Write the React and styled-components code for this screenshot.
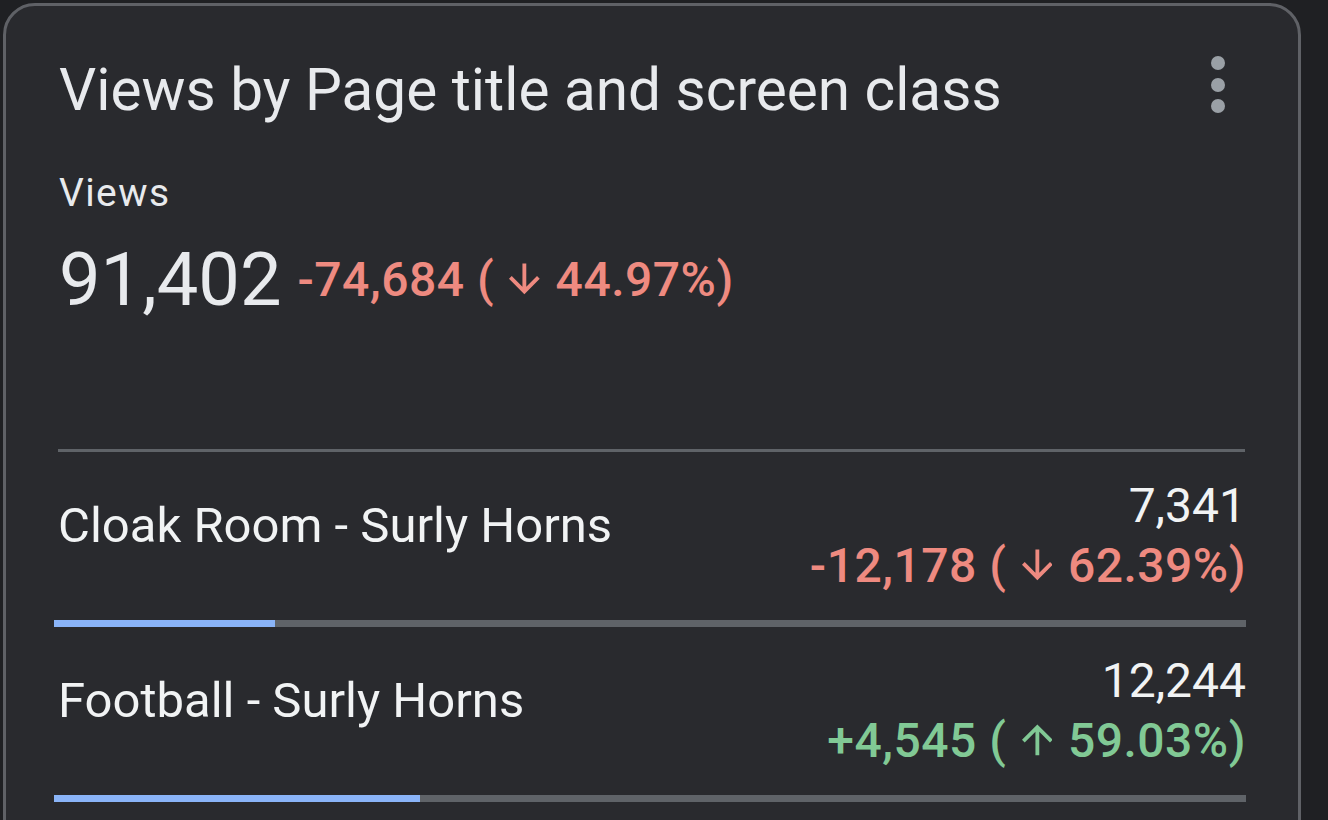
import styled, { createGlobalStyle } from 'styled-components';

const GlobalStyle = createGlobalStyle`
  html, body {
    margin: 0;
    padding: 0;
    background: #1f2023;
    font-family: Roboto, "Noto Sans", sans-serif;
  }
  body {
    overflow: hidden;
  }
`;

const rows = [
  { name: 'Cloak Room - Surly Horns', value: '7,341', delta: '-12,178', pct: '62.39%', up: false, share: 18.5 },
  { name: 'Football - Surly Horns', value: '12,244', delta: '+4,545', pct: '59.03%', up: true, share: 30.7 },
];

// material style arrow, cropped to its drawn box so it sits like a glyph
function Arrow({ up }) {
  return (
    <ArrowSvg viewBox="4 4 16 16" aria-hidden="true">
      <path
        transform={up ? 'rotate(180 12 12)' : undefined}
        d="M20 12l-1.41-1.41L13 16.17V4h-2v12.17l-5.58-5.59L4 12l8 8 8-8z"
      />
    </ArrowSvg>
  );
}

function Change({ delta, pct, up }) {
  return (
    <Delta up={up}>
      {delta} ( <Arrow up={up} /> {pct})
    </Delta>
  );
}

function App() {
  return (
    <>
      <GlobalStyle />
      <Page>
        <Card>
          <TitleRow>
            <Title>Views by Page title and screen class</Title>
            <Kebab aria-label="More options">
              <Dot />
              <Dot />
              <Dot />
            </Kebab>
          </TitleRow>
          <MetricLabel>Views</MetricLabel>
          <TotalRow>
            <Total>91,402</Total>
            <Change delta="-74,684" pct="44.97%" up={false} />
          </TotalRow>
          <Divider />
          {rows.map((r) => (
            <Row key={r.name}>
              <RowTop>
                <Name>{r.name}</Name>
                <Values>
                  <Value>{r.value}</Value>
                  <Change delta={r.delta} pct={r.pct} up={r.up} />
                </Values>
              </RowTop>
              <Track>
                <Fill style={{ width: `${r.share}%` }} />
              </Track>
            </Row>
          ))}
        </Card>
      </Page>
    </>
  );
}

const Page = styled.div`
  padding: 3px 0 0 3px;
  width: 1298px;
  height: 817px;
  overflow: hidden;
`;

const Card = styled.div`
  box-sizing: border-box;
  width: 1298px;
  min-height: 900px;
  background: #292a2e;
  border: 3px solid #5f6166;
  border-radius: 32px;
  padding: 55px 52px 0 48px;
`;

const TitleRow = styled.div`
  display: flex;
  justify-content: space-between;
  align-items: flex-start;
  padding-left: 5px;
`;

const Title = styled.h1`
  margin: 0;
  font-family: "Google Sans", Roboto, sans-serif;
  font-weight: 400;
  font-size: 58.5px;
  line-height: 58px;
  color: #e8eaed;
`;

const Kebab = styled.div`
  display: flex;
  flex-direction: column;
  gap: 7.5px;
  margin: -5px 21px 0 0;
`;

const Dot = styled.span`
  width: 14px;
  height: 14px;
  border-radius: 50%;
  background: #9aa0a6;
`;

const MetricLabel = styled.div`
  margin-top: 55px;
  padding-left: 5px;
  font-size: 39px;
  line-height: 38px;
  letter-spacing: 1.4px;
  color: #e8eaed;
`;

const TotalRow = styled.div`
  display: flex;
  align-items: center;
  gap: 16px;
  margin-top: 31px;
  padding-left: 5px;
`;

const Total = styled.div`
  font-size: 74px;
  line-height: 74px;
  font-weight: 400;
  color: #e8eaed;
`;

const Delta = styled.div`
  font-size: 48px;
  line-height: 60px;
  font-weight: 500;
  letter-spacing: 0.5px;
  color: ${(p) => (p.up ? '#81c995' : '#ee8a80')};
  white-space: nowrap;
`;

const ArrowSvg = styled.svg`
  width: 0.64em;
  height: 0.7em;
  margin: 0 3px;
  fill: currentColor;
  vertical-align: baseline;
`;

const Divider = styled.div`
  height: 3px;
  background: #5f6368;
  margin: 132px 1px 0 4px;
`;

const Row = styled.div`
  padding-top: 24px;
  &:first-of-type {
    padding-top: 34px;
  }
`;

const RowTop = styled.div`
  display: flex;
  justify-content: space-between;
  align-items: flex-start;
  padding-left: 4px;
`;

const Name = styled.div`
  margin-top: 20px;
  font-size: 49px;
  line-height: 60px;
  color: #f1f3f4;
`;

const Values = styled.div`
  display: flex;
  flex-direction: column;
  align-items: flex-end;
`;

const Value = styled.div`
  font-size: 48px;
  line-height: 60px;
  color: #f1f3f4;
`;

const Track = styled.div`
  margin-top: 24px;
  height: 7px;
  background: #5f6368;
`;

const Fill = styled.div`
  height: 100%;
  background: #8ab4f8;
`;

export default App;
